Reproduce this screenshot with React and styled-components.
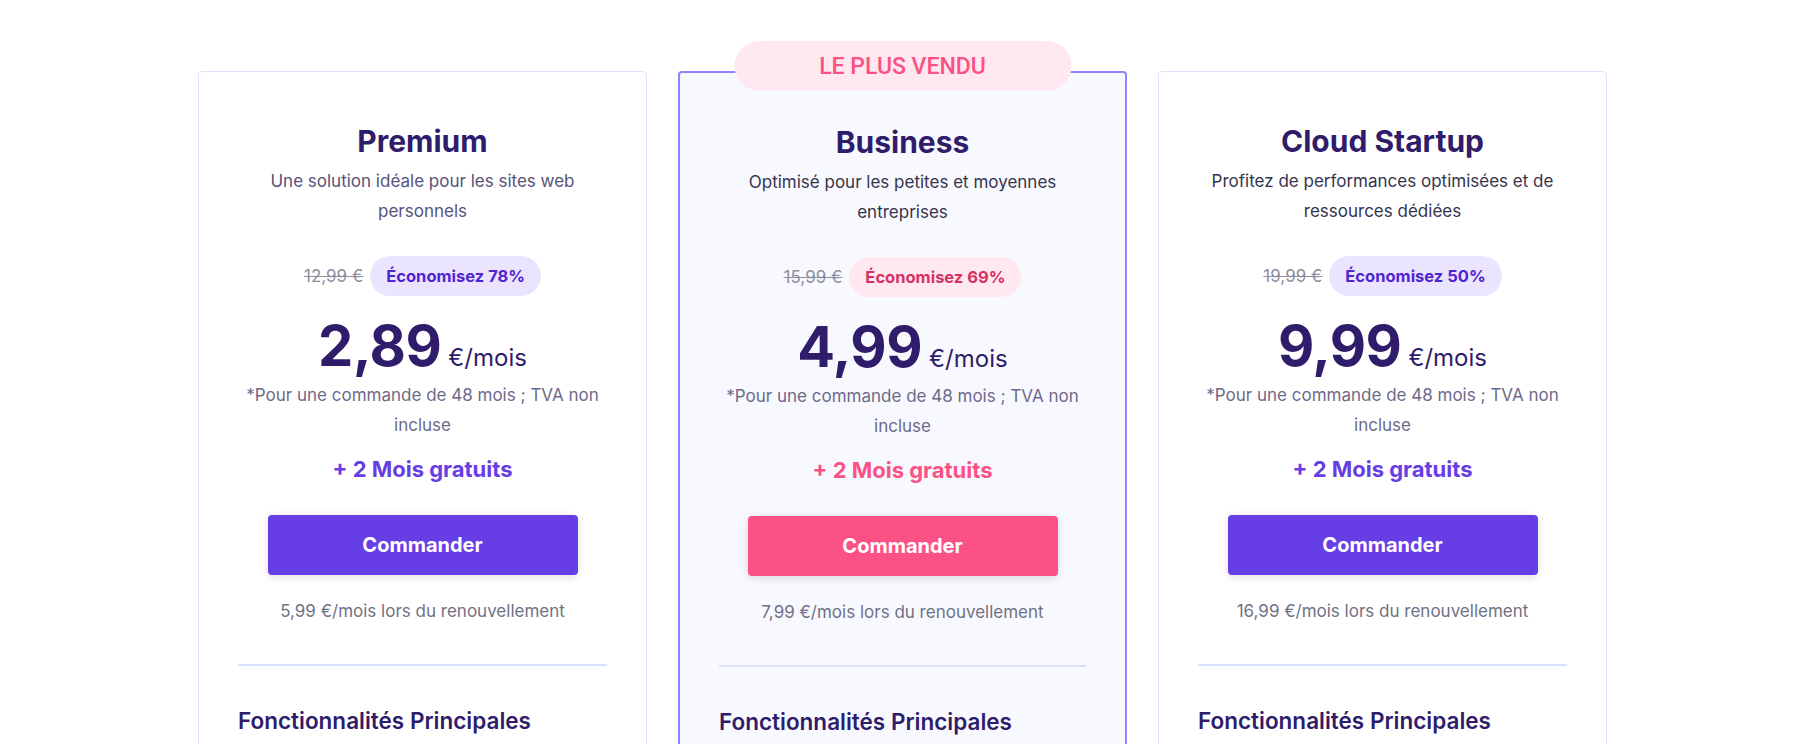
import React from 'react';
import styled, { createGlobalStyle } from 'styled-components';

const GlobalStyle = createGlobalStyle`
  html, body { margin: 0; padding: 0; background: #ffffff; }
  body {
    font-family: 'Inter', 'Liberation Sans', sans-serif;
    color: #2f1c6a;
    -webkit-font-smoothing: antialiased;
  }
  *, *::before, *::after { box-sizing: border-box; }
`;

const themes = {
  purple: { accent: '#673de6', saveBg: '#ebe4ff', saveText: '#5025d1' },
  pink: { accent: '#fc5185', saveBg: '#ffe8ef', saveText: '#d63163' },
};

const Page = styled.main`
  display: flex;
  justify-content: center;
  align-items: flex-start;
  gap: 31px;
  padding: 71px 11px 60px 0;
`;

const Card = styled.section`
  position: relative;
  flex: 0 0 449px;
  width: 449px;
  border: ${(p) => (p.$featured ? '2px solid #8c85ff' : '1px solid #dfe3fb')};
  background: ${(p) => (p.$featured ? '#f8f9ff' : '#ffffff')};
  border-radius: 4px;
  padding: 51px 39px 40px;
  display: flex;
  flex-direction: column;
  align-items: center;
  text-align: center;
`;

const Ribbon = styled.div`
  position: absolute;
  top: -32px;
  left: 50%;
  transform: translateX(-50%);
  width: 337px;
  height: 50px;
  border-radius: 25px;
  background: #ffe8ef;
  color: #fc5185;
  font-family: 'Roboto', 'Liberation Sans', sans-serif;
  font-weight: 500;
  font-size: 23px;
  display: flex;
  align-items: center;
  justify-content: center;
`;

const Title = styled.h2`
  margin: 0;
  font-size: 30px;
  line-height: 36px;
  font-weight: 700;
  color: #2f1c6a;
`;

const Description = styled.p`
  margin: 7px 0 0;
  font-size: 17px;
  line-height: 30px;
  color: ${(p) => p.$color || '#36344d'};
`;

const SaveRow = styled.div`
  margin-top: 30px;
  display: flex;
  align-items: center;
  gap: 7px;
`;

const OldPrice = styled.span`
  font-size: 17px;
  color: #8d8d9e;
  text-decoration: line-through;
`;

const SaveBadge = styled.span`
  display: inline-flex;
  align-items: center;
  height: 40px;
  padding: 0 16px;
  border-radius: 20px;
  background: ${(p) => p.$theme.saveBg};
  color: ${(p) => p.$theme.saveText};
  font-size: 16.5px;
  font-weight: 700;
`;

const PriceRow = styled.div`
  margin-top: 18px;
  display: flex;
  align-items: baseline;
  justify-content: center;
  gap: 7px;
  color: #2f1c6a;
`;

const Amount = styled.span`
  font-size: 56px;
  line-height: 64px;
  font-weight: 700;
  letter-spacing: -0.5px;
`;

const Unit = styled.span`
  font-size: 24px;
  font-weight: 400;
`;

const Footnote = styled.p`
  margin: 2px 0 0;
  font-size: 17px;
  line-height: 30px;
  color: #6d6a89;
`;

const Bonus = styled.p`
  margin: 14px 0 0;
  font-size: 22px;
  line-height: 30px;
  font-weight: 700;
  color: ${(p) => p.$theme.accent};
`;

const OrderButton = styled.button`
  margin-top: 31px;
  width: 310px;
  height: 60px;
  border: none;
  border-radius: 4px;
  background: ${(p) => p.$theme.accent};
  color: #ffffff;
  font-family: inherit;
  font-size: 20px;
  font-weight: 700;
  box-shadow: 0 2px 8px rgba(29, 30, 32, 0.14);
  cursor: pointer;
`;

const Renewal = styled.p`
  margin: 24px 0 0;
  font-size: 17px;
  line-height: 24px;
  color: #6f7285;
`;

const Divider = styled.hr`
  align-self: stretch;
  margin: 41px 0 0;
  height: 2px;
  border: none;
  background: #d8e0fb;
`;

const FeaturesTitle = styled.h3`
  align-self: flex-start;
  margin: 40px 0 0;
  font-size: 22.5px;
  line-height: 30px;
  font-weight: 600;
  color: #2f1c6a;
  text-align: left;
`;

const plans = [
  {
    name: 'Premium',
    desc: 'Une solution idéale pour les sites web personnels',
    descColor: '#57527a',
    old: '12,99 €',
    save: 'Économisez 78%',
    price: '2,89',
    renewal: '5,99 €/mois lors du renouvellement',
    theme: 'purple',
  },
  {
    name: 'Business',
    desc: 'Optimisé pour les petites et moyennes entreprises',
    old: '15,99 €',
    save: 'Économisez 69%',
    price: '4,99',
    renewal: '7,99 €/mois lors du renouvellement',
    theme: 'pink',
    featured: true,
  },
  {
    name: 'Cloud Startup',
    desc: 'Profitez de performances optimisées et de ressources dédiées',
    old: '19,99 €',
    save: 'Économisez 50%',
    price: '9,99',
    renewal: '16,99 €/mois lors du renouvellement',
    theme: 'purple',
  },
];

export default function App() {
  return (
    <>
      <GlobalStyle />
      <Page>
        {plans.map((p) => {
          const t = themes[p.theme];
          return (
            <Card key={p.name} $featured={p.featured}>
              {p.featured && <Ribbon>LE PLUS VENDU</Ribbon>}
              <Title>{p.name}</Title>
              <Description $color={p.descColor}>{p.desc}</Description>
              <SaveRow>
                <OldPrice>{p.old}</OldPrice>
                <SaveBadge $theme={t}>{p.save}</SaveBadge>
              </SaveRow>
              <PriceRow>
                <Amount>{p.price}</Amount>
                <Unit>€/mois</Unit>
              </PriceRow>
              <Footnote>*Pour une commande de 48 mois ; TVA non incluse</Footnote>
              <Bonus $theme={t}>+ 2 Mois gratuits</Bonus>
              <OrderButton $theme={t}>Commander</OrderButton>
              <Renewal>{p.renewal}</Renewal>
              <Divider />
              <FeaturesTitle>Fonctionnalités Principales</FeaturesTitle>
            </Card>
          );
        })}
      </Page>
    </>
  );
}
